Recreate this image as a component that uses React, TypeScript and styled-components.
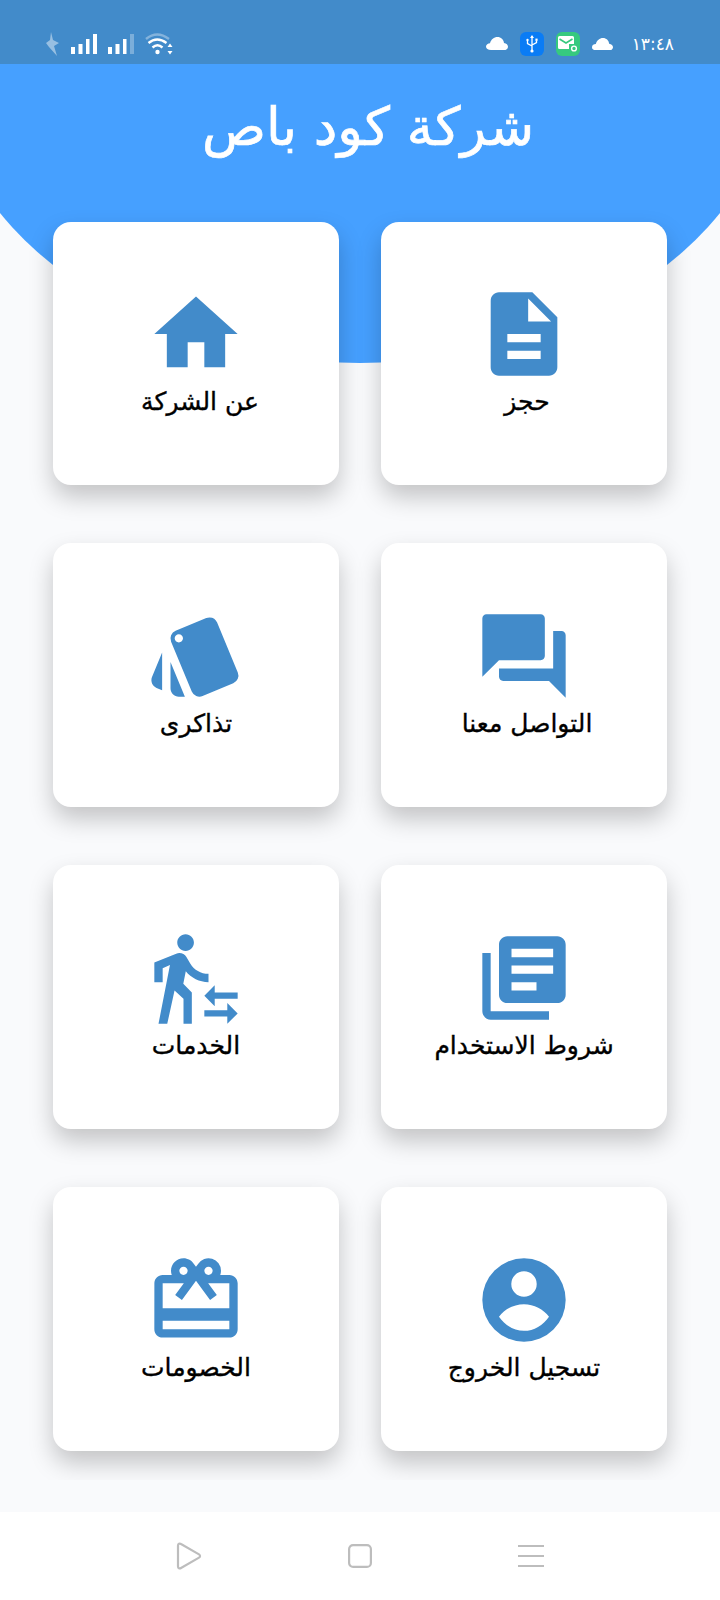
import React from 'react';
import styled, { createGlobalStyle } from 'styled-components';
import {
  MdCardGiftcard,
  MdDescription,
  MdHome,
  MdLibraryBooks,
  MdQuestionAnswer,
  MdStyle,
  MdTransferWithinAStation,
} from 'react-icons/md';

const GlobalStyle = createGlobalStyle`
  html, body {
    margin: 0;
    padding: 0;
    background: #f9fafc;
  }
`;

const Screen = styled.div`
  width: 720px;
  height: 1600px;
  display: flex;
  flex-direction: column;
  background: #f9fafc;
  font-family: 'DejaVu Sans', 'Noto Sans', sans-serif;
  overflow: hidden;
`;

const StatusBar = styled.div`
  height: 64px;
  flex: none;
  box-sizing: border-box;
  padding: 30px 46px 0 46px;
  display: flex;
  justify-content: space-between;
  align-items: flex-start;
  background: #428bca;
  position: relative;
  z-index: 2;
`;

const StatusGroup = styled.div<{ $gap: number }>`
  display: flex;
  align-items: center;
  gap: ${(p) => p.$gap}px;
  height: 28px;
`;

const Tile = styled.div<{ $bg: string }>`
  width: 24px;
  height: 24px;
  border-radius: 6px;
  background: ${(p) => p.$bg};
  display: flex;
  align-items: center;
  justify-content: center;
`;

const Clock = styled.span`
  color: #fff;
  font-size: 17px;
  margin-left: 7px;
`;

const Body = styled.div`
  height: 1416px;
  flex: none;
  position: relative;
  overflow: hidden;
`;

const Arc = styled.div`
  position: absolute;
  left: -58px;
  top: -311px;
  width: 836px;
  height: 610px;
  border-radius: 50%;
  background: #46a0ff;
`;

const Content = styled.div`
  position: relative;
  direction: rtl;
`;

const Title = styled.h1`
  margin: 0;
  height: 158px;
  box-sizing: border-box;
  padding: 27px 0 0 16px;
  text-align: center;
  color: #fff;
  font-size: 53px;
  line-height: 72px;
  font-weight: 400;
  -webkit-text-stroke: 0.7px #fff;
`;

const Grid = styled.div`
  display: grid;
  grid-template-columns: 286px 286px;
  grid-template-rows: 263px 264.5px 264.5px 264.5px;
  column-gap: 42px;
  row-gap: 57.5px;
  padding: 0 53px;
`;

const Card = styled.div`
  background: #fff;
  border-radius: 18px;
  box-shadow: 0 12px 24px rgba(0, 0, 0, 0.22);
  display: flex;
  flex-direction: column;
  align-items: center;
  justify-content: center;
  padding-bottom: 3px;
  box-sizing: border-box;

  &:nth-child(n + 3) {
    padding-bottom: 1px;
  }
`;

const CardLabel = styled.span<{ $nudge: number }>`
  color: #000;
  font-size: 25px;
  line-height: 36px;
  margin-left: ${(p) => p.$nudge}px;
  -webkit-text-stroke: 0.35px #000;
`;

const Gutter = styled.div`
  flex: none;
  height: 32px;
`;

const NavBar = styled.div`
  flex: 1;
  background: #fff;
  display: flex;
  align-items: center;
  justify-content: center;
  gap: 146px;
`;

const ICON_COLOR = '#428bca';

// the older material account_circle: the body is a lens that doesn't touch the rim
const AccountIcon = ({ size, color }: { size: number; color: string }) => (
  <svg width={size} height={size} viewBox="0 0 24 24">
    <path
      fill={color}
      fillRule="evenodd"
      d="M12 2a10 10 0 1 0 0 20 10 10 0 0 0 0-20zm0 3.1a3.05 3.05 0 1 1 0 6.1 3.05 3.05 0 0 1 0-6.1zM6 16C7.3 14.2 9.6 13 12 13s4.7 1.2 6 3c-1.4 2-3.6 3.4-6 3.4S7.4 18 6 16z"
    />
  </svg>
);

type CardIcon = React.ComponentType<{ size: number; color: string }>;

const items: { label: string; Icon: CardIcon; nudge: number }[] = [
  { label: 'حجز', Icon: MdDescription, nudge: 6 },
  { label: 'عن الشركة', Icon: MdHome, nudge: 8 },
  { label: 'التواصل معنا', Icon: MdQuestionAnswer, nudge: 6 },
  { label: 'تذاكرى', Icon: MdStyle, nudge: 0 },
  { label: 'شروط الاستخدام', Icon: MdLibraryBooks, nudge: 0 },
  { label: 'الخدمات', Icon: MdTransferWithinAStation, nudge: 0 },
  { label: 'تسجيل الخروج', Icon: AccountIcon, nudge: 0 },
  { label: 'الخصومات', Icon: MdCardGiftcard, nudge: 0 },
];

const Bolt = () => (
  <svg width="14" height="24" viewBox="0 0 14 24">
    <path d="M5 0 L7 8 L13 11 L8 14 L11 24 L3 15 L0 11 L4 8 Z" fill="#fff" opacity="0.45" />
  </svg>
);

const Signal = ({ weak }: { weak?: boolean }) => (
  <svg width="26" height="20" viewBox="0 0 26 20">
    <rect x="0" y="13" width="4" height="7" fill="#fff" />
    <rect x="7.5" y="10" width="4" height="10" fill="#fff" />
    <rect x="15" y="5" width="3.5" height="15" fill="#fff" />
    <rect x="22" y="0" width="4" height="20" fill="#fff" opacity={weak ? 0.3 : 1} />
  </svg>
);

const Wifi = () => (
  <svg width="28" height="22" viewBox="0 0 28 22" fill="none" stroke="#fff" strokeWidth="2.4">
    <path d="M1 6 Q12 -3 24 6" opacity="0.35" />
    <path d="M3.5 10 Q12 3 21.5 10" />
    <path d="M7.5 14.5 Q12.5 10 17.5 14.5" />
    <circle cx="12.5" cy="19" r="2.2" fill="#fff" stroke="none" />
    <path d="M25 10.5 L22.5 14 H27.5 Z M25 21.5 L22.5 18 H27.5 Z" fill="#fff" stroke="none" />
  </svg>
);

const Cloud = ({ w }: { w: number }) => (
  <svg width={w} height={w * 0.6} viewBox="0 0 22 13">
    <path
      d="M5 13 C2 13 0 11.5 0 9.5 C0 7.5 2 6.2 4 6.2 C5 2.5 8 0 11.5 0 C15 0 17.5 2.5 18 5.8 C20.5 6 22 7.6 22 9.6 C22 11.6 20 13 18 13 Z"
      fill="#fff"
    />
  </svg>
);

const Usb = () => (
  <svg width="14" height="18" viewBox="0 0 14 18" fill="none" stroke="#fff" strokeWidth="1.3">
    <path d="M7 1 V16 M2.5 6 V8.5 L7 11 M11.5 5.5 V7.5 L7 10" />
    <path d="M7 0 L9 3 H5 Z" fill="#fff" stroke="none" />
    <circle cx="7" cy="16" r="1.6" fill="#fff" stroke="none" />
    <circle cx="2.5" cy="5" r="1.2" fill="#fff" stroke="none" />
    <rect x="10.4" y="3.6" width="2.2" height="2.2" fill="#fff" stroke="none" />
  </svg>
);

const Mail = () => (
  <svg width="20" height="16" viewBox="0 0 20 16" fill="none">
    <path d="M0 1.5 A1.5 1.5 0 0 1 1.5 0 H14.5 A1.5 1.5 0 0 1 16 1.5 V8 H11 V13 H1.5 A1.5 1.5 0 0 1 0 11.5 Z" fill="#fff" />
    <path d="M1.5 3 L8 7 L14.5 3" stroke="#36c97f" strokeWidth="1.6" />
    <circle cx="16" cy="12.5" r="2.4" stroke="#fff" strokeWidth="1.4" />
  </svg>
);

const BackIcon = () => (
  <svg width="26" height="28" viewBox="0 0 26 28" fill="none" stroke="#bdbdbd" strokeWidth="2.2">
    <path d="M2 3.5 C2 1.8 3.6 1 5 2 L23 12.4 C24.4 13.3 24.4 14.7 23 15.6 L5 26 C3.6 27 2 26.2 2 24.5 Z" strokeLinejoin="round" />
  </svg>
);

const HomeIcon = () => (
  <svg width="24" height="24" viewBox="0 0 24 24" fill="none" stroke="#bdbdbd" strokeWidth="2.2">
    <rect x="1.1" y="1.1" width="21.8" height="21.8" rx="4" />
  </svg>
);

const MenuIcon = () => (
  <svg width="26" height="24" viewBox="0 0 26 24" fill="none" stroke="#bdbdbd" strokeWidth="2.2">
    <path d="M0 2 H26 M0 12 H26 M0 22 H26" />
  </svg>
);

const App: React.FC = () => (
  <Screen>
    <GlobalStyle />
    <StatusBar>
      <StatusGroup $gap={11}>
        <Bolt />
        <Signal />
        <Signal weak />
        <Wifi />
      </StatusGroup>
      <StatusGroup $gap={12}>
        <Cloud w={22} />
        <Tile $bg="#0a7cf5">
          <Usb />
        </Tile>
        <Tile $bg="#36c97f">
          <Mail />
        </Tile>
        <Cloud w={21} />
        <Clock>١٣:٤٨</Clock>
      </StatusGroup>
    </StatusBar>
    <Body>
      <Arc />
      <Content>
        <Title>شركة كود باص</Title>
        <Grid>
          {items.map(({ label, Icon, nudge }) => (
            <Card key={label}>
              <Icon size={100} color={ICON_COLOR} />
              <CardLabel $nudge={nudge}>{label}</CardLabel>
            </Card>
          ))}
        </Grid>
      </Content>
    </Body>
    <Gutter />
    <NavBar>
      <BackIcon />
      <HomeIcon />
      <MenuIcon />
    </NavBar>
  </Screen>
);

export default App;
